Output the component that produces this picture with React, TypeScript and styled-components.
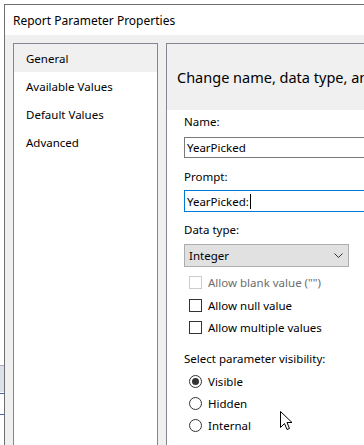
import React from 'react';
import styled, { createGlobalStyle } from 'styled-components';

const GlobalStyle = createGlobalStyle`
  html, body {
    margin: 0;
    padding: 0;
    background: #ffffff;
    overflow: hidden;
  }
  body {
    font-family: "Noto Sans", "Segoe UI", sans-serif;
    font-size: 11.5px;
    color: #000000;
  }
`;

const Screen = styled.div`
  display: flex;
  width: 364px;
  height: 445px;
  overflow: hidden;
`;

const Desktop = styled.div`
  width: 4px;
  flex-shrink: 0;
  display: flex;
  flex-direction: column;
  padding-top: 365px;
`;

const DesktopLine = styled.div<{ $color: string; $gap?: number }>`
  height: 1px;
  background: ${(p) => p.$color};
  margin-top: ${(p) => p.$gap ?? 0}px;
`;

const DesktopBand = styled.div`
  height: 26px;
  background: #dde2ea;
`;

const Dialog = styled.div`
  flex: 1;
  display: flex;
  flex-direction: column;
  margin-top: 4px;
  border-left: 1px solid #6f6f6f;
  border-top: 1px solid #6f6f6f;
  background: #f0f0f0;
  min-width: 0;
`;

const TitleBar = styled.div`
  height: 30px;
  flex-shrink: 0;
  background: #ffffff;
  display: flex;
  align-items: center;
  padding-left: 8px;
  padding-top: 1px;
  box-sizing: border-box;
  font-size: 12px;
`;

const Body = styled.div`
  flex: 1;
  display: flex;
  gap: 8px;
  padding: 8px 0 0 8px;
  min-height: 0;
`;

const Nav = styled.div`
  width: 143px;
  flex-shrink: 0;
  background: #ffffff;
  border: 1px solid #828790;
  border-bottom: none;
  display: flex;
  flex-direction: column;
`;

const NavItem = styled.div<{ $active?: boolean }>`
  height: 28px;
  display: flex;
  align-items: center;
  padding-left: 12px;
  background: ${(p) => (p.$active ? '#f0f0f0' : 'transparent')};
`;

const Panel = styled.div`
  flex: 1;
  min-width: 0;
  border-left: 1px solid #828790;
  border-top: 1px solid #828790;
  display: flex;
  flex-direction: column;
  overflow: hidden;
  position: relative;
`;

const PanelHeader = styled.div`
  height: 66px;
  flex-shrink: 0;
  background: #f0f0f0;
  display: flex;
  align-items: center;
  padding: 0 0 0 10px;
  white-space: nowrap;
  font-size: 14.5px;
  color: #000000;
`;

const Content = styled.div`
  flex: 1;
  background: #ffffff;
  display: flex;
  flex-direction: column;
  padding: 4px 0 0 17px;
`;

const Label = styled.div<{ $top: number }>`
  height: 16px;
  line-height: 16px;
  margin-top: ${(p) => p.$top}px;
  white-space: nowrap;
`;

const TextBox = styled.div<{ $top: number; $focused?: boolean; $height: number }>`
  margin-top: ${(p) => p.$top}px;
  height: ${(p) => p.$height}px;
  width: 400px;
  box-sizing: border-box;
  border: 1px solid ${(p) => (p.$focused ? '#0078d7' : '#7a7a7a')};
  display: flex;
  align-items: center;
  padding-left: 2px;
  white-space: nowrap;
`;

const Caret = styled.span`
  display: inline-block;
  width: 1px;
  height: 15px;
  background: #000000;
  margin-left: 1px;
`;

const Select = styled.div`
  margin-top: 6px;
  width: 165px;
  height: 23px;
  box-sizing: border-box;
  border: 1px solid #adadad;
  background: #e1e1e1;
  display: flex;
  align-items: center;
  justify-content: space-between;
  padding: 0 5px 0 4px;
`;

const OptionRow = styled.div<{ $top: number; $disabled?: boolean }>`
  margin-top: ${(p) => p.$top}px;
  height: 22px;
  display: flex;
  align-items: center;
  gap: 6px;
  padding-left: 5px;
  white-space: nowrap;
  color: ${(p) => (p.$disabled ? '#6d6d6d' : '#000000')};
`;

const CheckBox = styled.span<{ $disabled?: boolean }>`
  width: 13px;
  height: 13px;
  box-sizing: border-box;
  border: 1px solid ${(p) => (p.$disabled ? '#cccccc' : '#333333')};
  background: #ffffff;
  flex-shrink: 0;
`;

const Radio = styled.span<{ $checked?: boolean }>`
  width: 13px;
  height: 13px;
  box-sizing: border-box;
  border: 1px solid #333333;
  border-radius: 50%;
  background: #ffffff;
  flex-shrink: 0;
  display: flex;
  align-items: center;
  justify-content: center;
  &::after {
    content: '';
    width: 7px;
    height: 7px;
    border-radius: 50%;
    background: ${(p) => (p.$checked ? '#333333' : 'transparent')};
  }
`;

const Pointer = styled.svg`
  position: absolute;
  left: 113px;
  top: 367px;
`;

const Chevron = () => (
  <svg width="9" height="5" viewBox="0 0 9 5">
    <path d="M0.5 0.5 L4.5 4.5 L8.5 0.5" fill="none" stroke="#333" strokeWidth="1" />
  </svg>
);

export default function App() {
  return (
    <Screen>
      <GlobalStyle />
      <Desktop>
        <DesktopLine $color="#a5a9b3" />
        <DesktopBand />
        <DesktopLine $color="#4a62b0" $gap={1} />
        <DesktopLine $color="#4a62b0" $gap={20} />
      </Desktop>
      <Dialog>
        <TitleBar>Report Parameter Properties</TitleBar>
        <Body>
          <Nav>
            <NavItem $active>General</NavItem>
            <NavItem>Available Values</NavItem>
            <NavItem>Default Values</NavItem>
            <NavItem>Advanced</NavItem>
          </Nav>
          <Panel>
            <PanelHeader>Change name, data type, and other options.</PanelHeader>
            <Content>
              <Label $top={0}>Name:</Label>
              <TextBox $top={7} $height={21}>YearPicked</TextBox>
              <Label $top={11}>Prompt:</Label>
              <TextBox $top={5} $height={22} $focused>
                YearPicked:<Caret />
              </TextBox>
              <Label $top={10}>Data type:</Label>
              <Select>
                <span>Integer</span>
                <Chevron />
              </Select>
              <OptionRow $top={4} $disabled>
                <CheckBox $disabled />
                Allow blank value ("")
              </OptionRow>
              <OptionRow $top={1}>
                <CheckBox />
                Allow null value
              </OptionRow>
              <OptionRow $top={0}>
                <CheckBox />
                Allow multiple values
              </OptionRow>
              <Label $top={13}>Select parameter visibility:</Label>
              <OptionRow $top={3}>
                <Radio $checked />
                Visible
              </OptionRow>
              <OptionRow $top={0}>
                <Radio />
                Hidden
              </OptionRow>
              <OptionRow $top={0}>
                <Radio />
                Internal
              </OptionRow>
            </Content>
            <Pointer width="13" height="21" viewBox="0 0 13 21">
              <path
                d="M0.5 0.5 L0.5 16.5 L4.5 12.5 L7 18.5 L9.5 17.5 L7 11.5 L12 11.5 Z"
                fill="#ffffff"
                stroke="#000000"
                strokeWidth="1"
                strokeLinejoin="round"
              />
            </Pointer>
          </Panel>
        </Body>
      </Dialog>
    </Screen>
  );
}
